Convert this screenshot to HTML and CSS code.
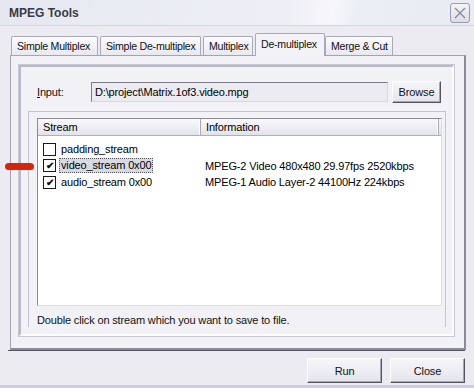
FILE: index.html
```html
<!DOCTYPE html>
<html lang="en">
<head>
    <meta charset="UTF-8">
    <title>MPEG Tools</title>
    <link rel="stylesheet" href="styles.css">
</head>
<body>
<div class="window">
  <div class="titlebar">
    <span class="title">MPEG Tools</span>
    <span class="close-btn">
      <svg width="14" height="14" viewBox="0 0 14 14"><path d="M2 2 L12 12 M12 2 L2 12" stroke="#8a8aa0" stroke-width="1.4" fill="none"/></svg>
    </span>
  </div>

  <div class="tabs">
    <div class="tab t1">Simple Multiplex</div>
    <div class="tab t2">Simple De-multiplex</div>
    <div class="tab t3">Multiplex</div>
    <div class="tab t4 active">De-multiplex</div>
    <div class="tab t5">Merge &amp; Cut</div>
  </div>

  <div class="tab-panel">
    <div class="group">
      <div class="input-row">
        <label class="label"><u>I</u>nput:</label>
        <div class="textbox">D:\project\Matrix.1of3.video.mpg</div>
        <button type="button" class="btn browse">Browse</button>
      </div>

      <div class="frame">
        <div class="listview">
          <div class="lv-header">
            <div class="col col-stream">Stream</div>
            <div class="col col-info">Information</div>
          </div>
          <div class="lv-row">
            <div class="cell-stream"><span class="check"></span><span class="name">padding_stream</span></div>
            <div class="cell-info"></div>
          </div>
          <div class="lv-row">
            <div class="cell-stream"><span class="check on">&#10004;</span><span class="name selected">video_stream 0x00</span></div>
            <div class="cell-info">MPEG-2 Video 480x480 29.97fps 2520kbps</div>
          </div>
          <div class="lv-row">
            <div class="cell-stream"><span class="check on">&#10004;</span><span class="name">audio_stream 0x00</span></div>
            <div class="cell-info">MPEG-1 Audio Layer-2 44100Hz 224kbps</div>
          </div>
        </div>
        <p class="hint">Double click on stream which you want to save to file.</p>
      </div>
    </div>
  </div>

  <div class="footer">
    <button type="button" class="btn big">Run</button>
    <button type="button" class="btn big">Close</button>
  </div>

  <!-- red marker drawn over the screenshot -->
  <div class="marker"></div>
</div>
</body>
</html>
```

FILE: styles.css
```css
* {
  box-sizing: border-box;
}

body {
  margin: 0;
  background: #ecebf2;
  font-family: "Liberation Sans", Arial, sans-serif;
  font-size: 11px;
  letter-spacing: -0.15px;
  color: #000;
}

.window {
  position: relative;
  width: 474px;
  height: 388px;
  background: #ecebf2;
  border-bottom: 3px solid #c9cde6;
}

.titlebar {
  height: 26px;
  display: flex;
  align-items: center;
  justify-content: space-between;
  padding: 0 4px 0 9px;
  background: linear-gradient(100deg, #e6e8f1 0%, #eeeff6 60%, #f7f7fb 70%, #eceef5 75%, #e9ebf3 100%);
  border-bottom: 1px solid #d4d6e2;
}

.title {
  font-weight: bold;
  font-size: 12px;
  color: #3a3a44;
  letter-spacing: 0;
}

.close-btn {
  width: 20px;
  height: 20px;
  display: flex;
  align-items: center;
  justify-content: center;
  border: 1px solid #9a9ab0;
  border-radius: 3px;
  background: linear-gradient(#f4f4f8, #dcdce6);
}

.tabs {
  display: flex;
  align-items: flex-end;
  height: 29px;
  padding-left: 11px;
}

.tab {
  height: 19px;
  line-height: 18px;
  padding: 0 0 0 5px;
  margin-right: 2px;
  border: 1px solid #a9a9b6;
  border-bottom: none;
  border-radius: 2px 2px 0 0;
  background: linear-gradient(#fbfbfd, #e8e8ef);
  white-space: nowrap;
  overflow: hidden;
  font-size: 10.6px;
  letter-spacing: -0.25px;
  color: #111;
}

.t1 { width: 87px; }
.t2 { width: 101px; }
.t3 { width: 50px; }
.t5 { width: 68px; }

.tab.active {
  width: 70px;
  height: 23px;
  line-height: 20px;
  margin: 0 0 -1px 0;
  position: relative;
  z-index: 1;
  background: #f3f3f7;
}

.tab-panel {
  margin: 0 8px 0 10px;
  height: 295px;
  padding: 9px 10px 12px 8px;
  background: #f1f1f6;
  border: 1px solid #a3a3b2;
  border-bottom: 2px solid #8a8a98;
  border-right: 2px solid #8a8a98;
}

.group {
  height: 100%;
  border: 2px solid;
  border-color: #b8b8c6 #fdfdff #fdfdff #b8b8c6;
  outline: 1px solid #c8c8d4;
  padding: 14px 6px 4px 7px;
}

.input-row {
  display: flex;
  align-items: center;
  height: 22px;
  padding-left: 9px;
}

.label {
  width: 54px;
  color: #111;
}

.textbox {
  width: 297px;
  height: 20px;
  line-height: 18px;
  padding-left: 3px;
  background: #ebebf1;
  border: 1px solid #7c7c88;
  border-right-color: #d8d8e0;
  border-bottom-color: #d8d8e0;
  white-space: nowrap;
  overflow: hidden;
}

.btn {
  font-family: "Liberation Sans", Arial, sans-serif;
  font-size: 11px;
  letter-spacing: -0.15px;
  color: #111;
  background: linear-gradient(#f6f6f9, #e4e4ec);
  border: 1px solid #fdfdff;
  border-right-color: #55555f;
  border-bottom-color: #55555f;
  box-shadow: inset -1px -1px 0 #a6a6b2;
  padding: 0;
}

.browse {
  width: 49px;
  height: 22px;
  margin-left: 4px;
}

.frame {
  margin-top: 8px;
  height: 216px;
  border-top: 1px solid #c4c4d0;
  border-left: 1px solid #c4c4d0;
  border-right: 1px solid #c4c4d0;
  padding: 6px 3px 0 8px;
}

.listview {
  height: 188px;
  background: #fff;
  border: 1px solid #8a8a96;
  border-right-color: #dcdce4;
  border-bottom-color: #dcdce4;
}

.lv-header {
  display: flex;
  height: 17px;
  line-height: 16px;
  background: linear-gradient(#fafafc, #e2e2ea);
  border-bottom: 1px solid #b0b0bc;
  margin-bottom: 5px;
}

.col {
  padding-left: 5px;
  border-right: 1px solid #a8a8b4;
  box-shadow: inset -1px 0 0 #fff;
}

.col-stream { width: 163px; }
.col-info { width: 238px; }

.lv-row {
  display: flex;
  height: 16.5px;
  align-items: center;
}

.cell-stream {
  width: 163px;
  display: flex;
  align-items: center;
  padding-left: 5px;
}

.cell-info {
  padding-left: 4px;
  white-space: nowrap;
}

.check {
  width: 13px;
  height: 13px;
  border: 1px solid #1a1a1a;
  background: #fff;
  font-size: 10px;
  line-height: 11px;
  text-align: center;
  font-weight: bold;
  color: #111;
  margin-right: 3px;
}

.name {
  padding: 0 1px;
  border: 1px solid transparent;
  line-height: 13px;
}

.name.selected {
  background: #d9d9e4;
  border: 1px dotted #55555f;
}

.hint {
  margin: 8px 0 0 0;
  color: #111;
}

.footer {
  margin: 0 9px 0 8px;
  border-top: 1px solid #555560;
  display: flex;
  justify-content: flex-end;
  gap: 8px;
  padding-top: 7px;
}

.big {
  width: 75px;
  height: 25px;
}

.marker {
  position: absolute;
  left: 5px;
  top: 163px;
  width: 29px;
  height: 7px;
  border-radius: 4px;
  background: #d9240c;
}
```
